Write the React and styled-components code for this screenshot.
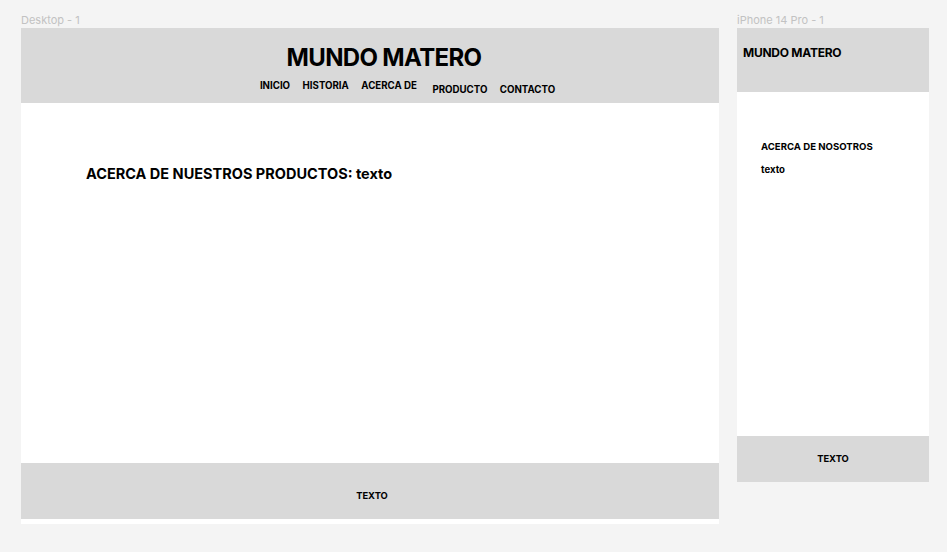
import React from 'react'
import styled, { createGlobalStyle } from 'styled-components'

const GlobalStyle = createGlobalStyle`
  body {
    margin: 0;
    background: #f4f4f4;
    font-family: Inter, "Liberation Sans", sans-serif;
    color: #000;
  }
`

const Canvas = styled.div`
  display: flex;
  align-items: flex-start;
  gap: 18px;
  padding: 12px 0 0 21px;
  height: 540px;
`

const Column = styled.div`
  display: flex;
  flex-direction: column;
  width: ${(p) => p.$width}px;
`

const FrameLabel = styled.div`
  font-size: 11px;
  line-height: 16px;
  color: #c2c2c2;
  white-space: nowrap;
`

const Frame = styled.div`
  display: flex;
  flex-direction: column;
  background: #fff;
`

const DesktopHeader = styled.header`
  display: flex;
  flex-direction: column;
  align-items: center;
  height: 75px;
  box-sizing: border-box;
  padding-top: 15px;
  background: #d9d9d9;
`

const BigTitle = styled.h1`
  margin: 0 0 0 28px;
  font-size: 24px;
  line-height: 29px;
  font-weight: 700;
  letter-spacing: -0.65px;
`

const Nav = styled.nav`
  display: flex;
  align-items: flex-start;
  gap: 12.5px;
  margin: 8px 0 0 75px;
`

const NavItem = styled.a`
  font-size: 9.7px;
  line-height: 12px;
  font-weight: 700;
  white-space: nowrap;
  padding-top: ${(p) => (p.$drop ? 3.5 : 0)}px;
  margin-left: ${(p) => (p.$wide ? 3 : 0)}px;
`

const DesktopBody = styled.main`
  height: 360px;
  box-sizing: border-box;
  padding: 62px 0 0 65px;
`

const Heading = styled.h2`
  margin: 0;
  font-size: 14.5px;
  line-height: 17px;
  font-weight: 700;
`

const Footer = styled.footer`
  display: flex;
  justify-content: center;
  height: ${(p) => p.$h}px;
  box-sizing: border-box;
  padding-top: ${(p) => p.$top}px;
  padding-left: ${(p) => p.$left || 0}px;
  background: #d9d9d9;
`

const FooterText = styled.span`
  font-size: 9.4px;
  line-height: 12px;
  font-weight: 700;
`

const BottomStrip = styled.div`
  height: 5px;
  background: #fff;
`

const PhoneHeader = styled.header`
  height: 64px;
  box-sizing: border-box;
  padding: 17px 0 0 6px;
  background: #d9d9d9;
`

const PhoneTitle = styled.h1`
  margin: 0;
  font-size: 12px;
  line-height: 15px;
  font-weight: 700;
  letter-spacing: -0.25px;
`

const PhoneBody = styled.main`
  display: flex;
  flex-direction: column;
  gap: 12px;
  height: 344px;
  box-sizing: border-box;
  padding: 49px 0 0 24px;
`

const SmallText = styled.p`
  margin: 0;
  font-size: 9.6px;
  line-height: 11px;
  font-weight: 700;
`

const links = [
  { label: 'INICIO' },
  { label: 'HISTORIA' },
  { label: 'ACERCA DE' },
  { label: 'PRODUCTO', drop: true, wide: true },
  { label: 'CONTACTO', drop: true },
]

export default function App() {
  return (
    <>
      <GlobalStyle />
      <Canvas>
        <Column $width={698}>
          <FrameLabel>Desktop - 1</FrameLabel>
          <Frame>
            <DesktopHeader>
              <BigTitle>MUNDO MATERO</BigTitle>
              <Nav>
                {links.map((l) => (
                  <NavItem key={l.label} $drop={l.drop} $wide={l.wide}>
                    {l.label}
                  </NavItem>
                ))}
              </Nav>
            </DesktopHeader>
            <DesktopBody>
              <Heading>ACERCA DE NUESTROS PRODUCTOS: texto</Heading>
            </DesktopBody>
            <Footer $h={56} $top={27} $left={4}>
              <FooterText>TEXTO</FooterText>
            </Footer>
            <BottomStrip />
          </Frame>
        </Column>
        <Column $width={192}>
          <FrameLabel>iPhone 14 Pro - 1</FrameLabel>
          <Frame>
            <PhoneHeader>
              <PhoneTitle>MUNDO MATERO</PhoneTitle>
            </PhoneHeader>
            <PhoneBody>
              <SmallText>ACERCA DE NOSOTROS</SmallText>
              <SmallText>texto</SmallText>
            </PhoneBody>
            <Footer $h={46} $top={17}>
              <FooterText>TEXTO</FooterText>
            </Footer>
          </Frame>
        </Column>
      </Canvas>
    </>
  )
}
